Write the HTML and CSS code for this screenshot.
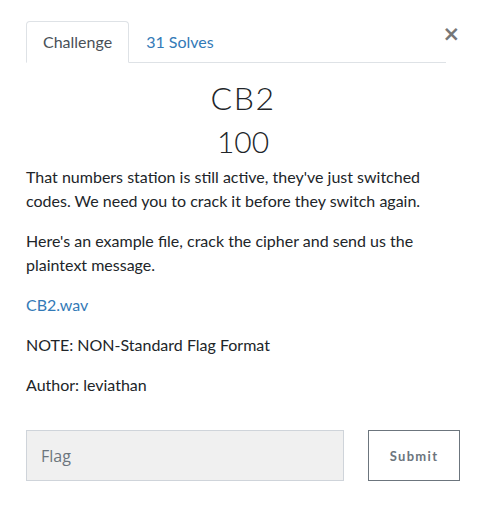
FILE: index.html
```
<!DOCTYPE html>
<html>
<head>
<meta charset="utf-8">
<link rel="stylesheet" href="styles.css">
</head>
<body>
<div class="modal">
  <button class="close" aria-label="Close">&times;</button>
  <ul class="tabs">
    <li class="tab active">Challenge</li>
    <li class="tab"><a href="#">31 Solves</a></li>
  </ul>
  <h2 class="title">CB2</h2>
  <h3 class="value">100</h3>
  <div class="desc">
    <p>That numbers station is still active, they've just switched codes. We need you to crack it before they switch again.</p>
    <p>Here's an example file, crack the cipher and send us the plaintext message.</p>
    <p><a href="#">CB2.wav</a></p>
    <p>NOTE: NON-Standard Flag Format</p>
    <p>Author: leviathan</p>
  </div>
  <div class="form">
    <input class="flag" type="text" placeholder="Flag">
    <button class="submit">Submit</button>
  </div>
</div>
</body>
</html>
```
FILE: styles.css
```
html, body { margin: 0; padding: 0; background: #fff; }
body { font-family: Lato, "Open Sans", sans-serif; color: #212529; font-size: 16px; line-height: 24px; }
.modal { position: relative; padding: 21px 21px 0 26px; }
.close { position: absolute; top: 22px; right: 21px; border: 0; background: none; font-size: 21px; font-weight: 700; color: #777; padding: 0; line-height: 24px; font-family: "DejaVu Sans", sans-serif; }
.tabs { list-style: none; margin: 0; padding: 0; display: flex; width: 420px; border-bottom: 1px solid #dee2e6; }
.tab { padding: 8px 16px; border: 1px solid transparent; border-radius: 4px 4px 0 0; margin-bottom: -1px; color: #495057; font-size: 16px; line-height: 24px; }
.tab.active { border-color: #dee2e6 #dee2e6 #fff; background: #fff; }
.tab a { color: #337ab7; text-decoration: none; }
.title { margin: 16px 0 0; text-align: center; font-weight: 300; font-size: 32px; line-height: 38px; letter-spacing: 1.5px; }
.value { margin: 6px 0 6px; text-align: center; font-weight: 300; font-size: 30px; line-height: 36px; }
.desc p { margin: 0 0 16px; }
.desc a { color: #337ab7; text-decoration: none; }
.form { display: flex; gap: 24px; margin-top: 33px; }
.flag { width: 318px; height: 51px; box-sizing: border-box; background: #f0f0f0; border: 1px solid #cfd4da; padding: 0 14px; font-family: "Open Sans", sans-serif; font-weight: 500; font-size: 16px; color: #495057; outline: none; }
.flag::placeholder { color: #6c757d; }
.submit { width: 92px; height: 51px; box-sizing: border-box; background: #fff; border: 1px solid #6c757d; color: #6c757d; font-family: Lato, sans-serif; font-weight: 700; font-size: 13px; letter-spacing: 1.3px; }
```
